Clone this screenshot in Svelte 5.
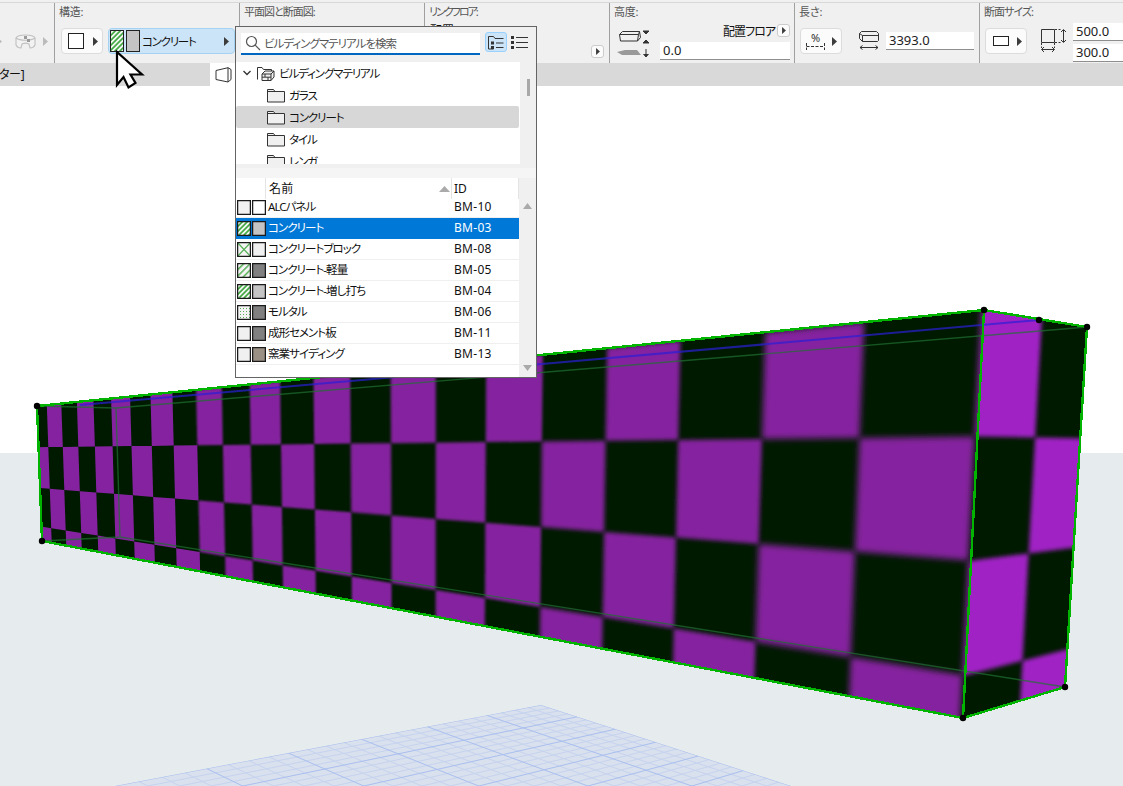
<script>
  // projective map of the unit square onto a quad (tl, tr, br, bl)
  const quad = (p0, p1, p2, p3) => {
    const dx1 = p1[0] - p2[0], dx2 = p3[0] - p2[0], sx = p0[0] - p1[0] + p2[0] - p3[0]
    const dy1 = p1[1] - p2[1], dy2 = p3[1] - p2[1], sy = p0[1] - p1[1] + p2[1] - p3[1]
    const den = dx1 * dy2 - dx2 * dy1
    const g = (sx * dy2 - dx2 * sy) / den
    const h = (dx1 * sy - sx * dy1) / den
    const a = p1[0] - p0[0] + g * p1[0], b = p3[0] - p0[0] + h * p3[0]
    const d = p1[1] - p0[1] + g * p1[1], e = p3[1] - p0[1] + h * p3[1]
    return (u, v) => {
      const w = g * u + h * v + 1
      return [(a * u + b * v + p0[0]) / w, (d * u + e * v + p0[1]) / w]
    }
  }
  const pts = list => list.map(p => p[0].toFixed(1) + ',' + p[1].toFixed(1)).join(' ')
  const line = (m, a, b) => { const s = m(...a), e = m(...b); return { x1: s[0], y1: s[1], x2: e[0], y2: e[1] } }

  const frontQuad = [[37, 406], [984, 310], [963, 718], [42, 541]]
  const sideQuad = [[984, 310], [1087, 327], [1065, 687], [963, 718]]

  const rowsV = [0, 0.302, 0.605, 0.892, 1.2]
  const frontMap = quad(...frontQuad)
  const sideMap = quad(...sideQuad)

  const frontCells = []
  for (let i = 0; i < 24; i++) {
    const u0 = -0.013 + 0.044 * i, u1 = u0 + 0.044
    for (let j = 0; j < 4; j++) {
      if ((i + j) % 2 == 0) continue
      const v0 = rowsV[j], v1 = rowsV[j + 1]
      const p = [frontMap(u0, v0), frontMap(u1, v0), frontMap(u1, v1), frontMap(u0, v1)]
      const w = p[1][0] - p[0][0]
      const level = w < 25 ? 0 : w < 40 ? 1 : w < 60 ? 2 : w < 85 ? 3 : 4
      frontCells.push({ points: pts(p), level })
    }
  }

  const sideCells = []
  const sideU = [-0.5, 0.53, 1.5]
  for (let i = 0; i < 2; i++) {
    for (let j = 0; j < 4; j++) {
      if ((i + j) % 2 == 1) continue
      const v0 = rowsV[j] - (j == 0 ? 0.2 : 0), v1 = rowsV[j + 1]
      sideCells.push(pts([sideMap(sideU[i], v0), sideMap(sideU[i + 1], v0), sideMap(sideU[i + 1], v1), sideMap(sideU[i], v1)]))
    }
  }

  // floor grid
  const gridQuad = [[541, 705], [791, 786], [371, 926], [115, 786]]
  const gridMap = quad(...gridQuad)
  const gridMinor = [], gridMajor = []
  for (let i = 0; i <= 24; i++) {
    const t = i / 24
    const target = i % 4 == 0 ? gridMajor : gridMinor
    target.push(line(gridMap, [t, 0], [t, 1]))
    target.push(line(gridMap, [0, t], [1, t]))
  }

  const folders = [
    { name: 'ガラス' },
    { name: 'コンクリート', selected: true },
    { name: 'タイル' },
    { name: 'レンガ' }
  ]

  const materials = [
    { name: 'ALCパネル', id: 'BM-10', pattern: '#f0f0f0', color: '#ffffff' },
    { name: 'コンクリート', id: 'BM-03', pattern: 'url(#hatch)', color: '#c4c4c4', selected: true },
    { name: 'コンクリートブロック', id: 'BM-08', pattern: 'url(#cross)', color: '#f0f0f0' },
    { name: 'コンクリート-軽量', id: 'BM-05', pattern: 'url(#hatch-wide)', color: '#808080' },
    { name: 'コンクリート-増し打ち', id: 'BM-04', pattern: 'url(#hatch)', color: '#c4c4c4' },
    { name: 'モルタル', id: 'BM-06', pattern: 'url(#dots)', color: '#808080' },
    { name: '成形セメント板', id: 'BM-11', pattern: '#f0f0f0', color: '#808080' },
    { name: '窯業サイディング', id: 'BM-13', pattern: '#f0f0f0', color: '#9a9084' }
  ]
</script>

<div class="page">
  <header class="toolbar">
    <section class="first">
      <div class="body">
        <svg class="tri faded cut" viewBox="0 0 5 9"><path d="M0 0l5 4.500L0 9z" /></svg>
        <svg width="21" height="15" viewBox="0 0 21 15" fill="#f2f2f2" stroke="#c0c0c0" stroke-width="1.100">
          <path d="M1 4c2-4 17-4 19 0v7c-1 2-3 3-5 3l-1-4c-2-1-5-1-7 0l-1 4c-2 0-4-1-5-3z" />
          <path d="M1 4c4 3 15 3 19 0" fill="none" />
          <path d="M9 2h3v3H9zM12 5h3v3h-3z" fill="#9a9a9a" stroke="none" />
        </svg>
        <svg class="tri faded" viewBox="0 0 5 9"><path d="M0 0l5 4.500L0 9z" /></svg>
      </div>
    </section>

    <section class="structure">
      <div class="label">構造:</div>
      <div class="body">
        <button class="pick small">
          <span class="plain-box"></span>
          <svg class="tri" viewBox="0 0 5 9"><path d="M0 0l5 4.500L0 9z" /></svg>
        </button>
        <button class="pick wide">
          <svg class="tall" viewBox="0 0 14 22"><rect x=".5" y=".5" width="13" height="21" fill="url(#hatch)" stroke="#222" /></svg>
          <svg class="tall" viewBox="0 0 14 22"><rect x=".5" y=".5" width="13" height="21" fill="#c4c4c4" stroke="#222" /></svg>
          <span class="pick-name">コンクリート</span>
          <svg class="tri" viewBox="0 0 5 9"><path d="M0 0l5 4.500L0 9z" /></svg>
        </button>
      </div>
    </section>

    <section>
      <div class="label squeezed">平面図と断面図:</div>
    </section>

    <section class="link">
      <div class="label kana">リンクフロア:</div>
      <div class="clipped">配置</div>
      <button class="mini"><svg class="tri" viewBox="0 0 5 9"><path d="M0 0l5 4.500L0 9z" /></svg></button>
    </section>

    <section class="height">
      <div class="label">高度:</div>
      <div class="body">
        <svg width="33" height="28" viewBox="0 0 33 28" fill="none" stroke="#333">
          <path d="M2.500 4.500l3-3h17l1 6-3 3.500H3.500zM2.500 4.500h19l-1 6.500M21.500 4.500l1-3" />
          <path d="M0 22l8-2h12l4 5H5z" fill="#999" stroke="none" />
          <path d="M26 1h6l-3 3zM26 13h6l-3-3zM29 19v7M26.500 24l2.500 3 2.500-3" fill="#333" stroke-width="1" />
        </svg>
        <div class="height-fields">
          <div class="height-top">配置フロア<button class="mini"><svg class="tri" viewBox="0 0 5 9"><path d="M0 0l5 4.500L0 9z" /></svg></button></div>
          <div class="field">0.0</div>
        </div>
      </div>
    </section>

    <section class="length">
      <div class="label">長さ:</div>
      <div class="body">
        <button class="pick small">
          <span class="percent">%<svg width="19" height="7" viewBox="0 0 19 7" fill="none" stroke="#333"><path d="M.5 0v7M18.500 0v7M.5 3.500h18" stroke-dasharray="3 1.500" /></svg></span>
          <svg class="tri" viewBox="0 0 5 9"><path d="M0 0l5 4.500L0 9z" /></svg>
        </button>
        <svg class="length-icon" width="21" height="20" viewBox="0 0 21 20" fill="none" stroke="#333">
          <path d="M.5 2.500l2-2h15l2 2v7l-1 1h-15l-3-3zM.5 2.500l3 2h16M3.500 4.500v6" />
          <path d="M1 16.500h18M3.500 14.500l-2.500 2 2.500 2M16.500 14.500l2.500 2-2.500 2" />
        </svg>
        <div class="field">3393.0</div>
      </div>
    </section>

    <section class="size">
      <div class="label squeezed">断面サイズ:</div>
      <div class="body">
        <button class="pick small">
          <span class="flat-box"></span>
          <svg class="tri" viewBox="0 0 5 9"><path d="M0 0l5 4.500L0 9z" /></svg>
        </button>
        <svg class="size-icon" width="25" height="24" viewBox="0 0 25 24" fill="none" stroke="#333">
          <path d="M.5.500h13v13H.5z" />
          <path d="M14 .5h6M14 13.500h6M.5 14v5M13.500 14v5" stroke-dasharray="2 1.500" />
          <path d="M22.500 1v12M20 3l2.500-2.500L25 3M20 11l2.500 2.500L25 11M1 20.500h12M3 18l-2.500 2.500L3 23M11 18l2.500 2.500L11 23" />
        </svg>
        <div class="size-fields">
          <div class="field">500.0</div>
          <div class="field">300.0</div>
        </div>
      </div>
    </section>
  </header>

  <nav class="tabs">
    <span class="tab-name">ター]</span>
    <div class="tab-active">
      <svg width="17" height="16" viewBox="0 0 17 16" fill="none" stroke="#333"><path d="M1 3.500L13 .7l3 1.800v10L13 15 1 12.500zM13 .7V15" /></svg>
    </div>
  </nav>

  <main class="viewport">
    <svg class="scene" viewBox="0 86 1123 700" width="1123" height="700">
      <defs>
        <pattern id="hatch" width="3.500" height="3.500" patternUnits="userSpaceOnUse" patternTransform="rotate(-45)">
          <rect width="3.500" height="3.500" fill="#f2f6f2" />
          <rect width="3.500" height="1.700" fill="#3fa83f" />
        </pattern>
        <pattern id="hatch-wide" width="4.500" height="4.500" patternUnits="userSpaceOnUse" patternTransform="rotate(-45)">
          <rect width="4.500" height="4.500" fill="#f4f4f4" />
          <rect width="4.500" height="1.500" fill="#57b157" />
        </pattern>
        <pattern id="cross" width="14" height="15" patternUnits="userSpaceOnUse">
          <rect width="14" height="15" fill="#f4f4f4" />
          <path d="M0 0l14 15M14 0L0 15" stroke="#57b157" stroke-width="1.200" />
        </pattern>
        <pattern id="dots" width="3" height="3" patternUnits="userSpaceOnUse">
          <rect width="3" height="3" fill="#f4f4f4" />
          <rect width="1" height="1" fill="#57b157" />
        </pattern>
        {#each [0.5, 1, 1.5, 2.200, 3] as sd, i}
          <filter id="blur{i}" x="-60%" y="-60%" width="220%" height="220%"><feGaussianBlur stdDeviation={sd} /></filter>
        {/each}
        <clipPath id="front-clip"><polygon points={pts(frontQuad)} /></clipPath>
        <clipPath id="side-clip"><polygon points={pts(sideQuad)} /></clipPath>
        <clipPath id="grid-clip"><polygon points={pts(gridQuad)} /></clipPath>
      </defs>

      <rect x="0" y="86" width="1123" height="367" fill="#ffffff" />
      <rect x="0" y="453" width="1123" height="333" fill="#e6ebed" />

      <polygon points={pts(gridQuad)} fill="#d9e0ee" />
      <g clip-path="url(#grid-clip)">
        {#each gridMinor as l}<line {...l} stroke="#c6d3ee" stroke-width="1" />{/each}
        {#each gridMajor as l}<line {...l} stroke="#a9bfee" stroke-width="1" />{/each}
      </g>

      <polygon points={pts(frontQuad)} fill="#001a00" />
      <g clip-path="url(#front-clip)">
        {#each frontCells as c}
          <polygon points={c.points} fill="#85229f" filter="url(#blur{c.level})" />
        {/each}
      </g>
      <polygon points={pts(sideQuad)} fill="#001a00" />
      <g clip-path="url(#side-clip)">
        {#each sideCells as c}
          <polygon points={c} fill="#a024c5" filter="url(#blur3)" />
        {/each}
      </g>

      <g fill="none" stroke="#1f7030" stroke-width="1.400" opacity=".7">
        <polyline points="37,406 116,408 120,537 42,541" />
        <line x1="116" y1="408" x2="1087" y2="327" />
        <line x1="120" y1="537" x2="1065" y2="687" />
      </g>
      <line x1="80" y1="405" x2="1039" y2="320" stroke="#2a1fd6" stroke-width="2" opacity=".7" />

      <g fill="none" stroke="#00b400" stroke-width="2.400" shape-rendering="crispEdges">
        <polygon points={pts(frontQuad)} />
        <polygon points={pts(sideQuad)} />
      </g>
      <g fill="#000">
        {#each [[37, 406], [42, 541], [984, 310], [1039, 320], [1087, 327], [1065, 687], [963, 718]] as p}
          <circle cx={p[0]} cy={p[1]} r="3.200" />
        {/each}
      </g>
    </svg>
  </main>

  <div class="popup">
    <div class="search-row">
      <div class="search">
        <svg width="16" height="16" viewBox="0 0 16 16" fill="none" stroke="#555" stroke-width="1.200"><circle cx="6.500" cy="6.500" r="5" /><path d="M10.200 10.200l4.800 4.800" /></svg>
        <span>ビルディングマテリアルを検索</span>
      </div>
      <button class="view active">
        <svg width="16" height="15" viewBox="0 0 16 15" fill="none" stroke="#333"><path d="M.5 14V1.500h5l1.500 2h8.500M.5 14h5" /><path d="M8 8h7.500M8 12.500h7.500" /><rect x="3" y="6.500" width="3" height="3" fill="#333" stroke="none" /><rect x="3" y="11" width="3" height="3" fill="#333" stroke="none" /></svg>
      </button>
      <button class="view">
        <svg width="17" height="13" viewBox="0 0 17 13" fill="none" stroke="#333"><path d="M5 1.500h12M5 6.500h12M5 11.500h12" /><path d="M0 0h3v3H0zM0 5h3v3H0zM0 10h3v3H0z" fill="#333" stroke="none" /></svg>
      </button>
    </div>

    <div class="tree-wrap">
      <div class="tree">
        <div class="tree-row root">
          <svg width="8" height="6" viewBox="0 0 8 6" fill="none" stroke="#333" stroke-width="1.300"><path d="M.5 1L4 4.500 7.500 1" /></svg>
          <svg class="root-folder" width="18" height="15" viewBox="0 0 18 15" fill="#f0f0f0" stroke="#333">
            <path d="M.5 13.500V1.500h4.500l1.500 2h8v2" fill="none" />
            <path d="M5 8l3-3h9v6l-3 3.500H5z" />
            <path d="M5 8h9v6.500M5 11.200h9M8 8v3M11 11.200v3M14 8l3-3" fill="none" />
          </svg>
          <span>ビルディングマテリアル</span>
        </div>
        {#each folders as f}
          <div class="tree-row child" class:selected={f.selected}>
            <svg width="18" height="15" viewBox="0 0 18 15" fill="#f0f0f0" stroke="#333"><path d="M.5 14V1.500h6l1.500 2h9.500V14z" /><path d="M.5 3.500H8" fill="none" /></svg>
            <span>{f.name}</span>
          </div>
        {/each}
      </div>
      <div class="tree-bar"><div class="thumb"></div></div>
    </div>

    <div class="splitter"></div>

    <div class="list-wrap">
      <div class="list">
        <div class="list-head">
          <div class="head-cell"></div>
          <div class="head-cell name">名前<svg width="11" height="6" viewBox="0 0 11 6"><path d="M5.500 0L11 6H0z" fill="#aaa" /></svg></div>
          <div class="head-cell id">ID</div>
        </div>
        {#each materials as m}
          <div class="list-row" class:selected={m.selected}>
            <div class="swatches">
              <svg class="sw" viewBox="0 0 14 15"><rect x=".6" y=".6" width="12.800" height="13.800" fill={m.pattern} stroke="#1a1a1a" stroke-width="1.300" /></svg>
              <svg class="sw" viewBox="0 0 14 15"><rect x=".6" y=".6" width="12.800" height="13.800" fill={m.color} stroke="#1a1a1a" stroke-width="1.300" /></svg>
            </div>
            <div class="cell-name">{m.name}</div>
            <div class="cell-id">{m.id}</div>
          </div>
        {/each}
      </div>
      <div class="list-bar">
        <svg width="9" height="6" viewBox="0 0 9 6"><path d="M4.500 0L9 6H0z" fill="#aaa" /></svg>
        <svg width="9" height="6" viewBox="0 0 9 6"><path d="M4.500 6L9 0H0z" fill="#aaa" /></svg>
      </div>
    </div>
  </div>

  <svg class="cursor" width="30" height="40" viewBox="0 0 30 40">
    <path d="M2 2v33l6.500-8 5 10.500 7-4.500-5-8.500h11.500z" fill="#fff" stroke="#000" stroke-width="2.200" stroke-linejoin="miter" />
  </svg>
</div>

<style>
  :global(body) {
    margin: 0;
    background: #fff;
    overflow: hidden;
  }
  .page {
    position: relative;
    width: 1123px;
    height: 786px;
    display: flex;
    flex-direction: column;
    overflow: hidden;
    font-family: "Noto Sans", "Noto Sans CJK JP", sans-serif;
    font-feature-settings: "palt";
    font-size: 12px;
    color: #111;
  }
  button {
    font: inherit;
    padding: 0;
    margin: 0;
  }

  /* toolbar */
  .toolbar {
    height: 63px;
    flex: none;
    box-sizing: border-box;
    display: flex;
    padding-top: 3px;
    background: linear-gradient(#f0f0f0 2px, #d8d8d8 2px, #d8d8d8 3px, #f0f0f0 3px);
  }
  section {
    width: 185px;
    flex: none;
    box-sizing: border-box;
    border-left: 1px solid #a0a0a0;
    position: relative;
  }
  section.first {
    width: 54px;
    border-left: 0;
  }
  .label {
    height: 16px;
    line-height: 17px;
    padding-left: 4px;
    font-size: 11px;
    letter-spacing: -0.2px;
    color: #555;
  }
  .label.squeezed {
    letter-spacing: -1px;
  }
  .label.kana {
    letter-spacing: -2px;
  }
  .body {
    height: 44px;
    display: flex;
    align-items: center;
  }
  .first .body {
    height: 60px;
    padding-top: 16px;
    box-sizing: border-box;
    gap: 7px;
  }
  .tri {
    width: 5px;
    height: 9px;
    flex: none;
    fill: #3c3c3c;
  }
  .tri.faded {
    fill: #bbb;
  }
  .tri.cut {
    margin-left: -3px;
    margin-right: 6px;
  }
  .pick {
    height: 26px;
    box-sizing: border-box;
    display: flex;
    align-items: center;
    background: #fbfbfb;
    border: 1px solid #dcdcdc;
    border-radius: 4px;
  }
  .pick.small {
    width: 42px;
    justify-content: space-between;
    padding: 0 4px 0 6px;
  }
  .structure .body {
    padding-left: 6px;
  }
  .pick.wide {
    width: 127px;
    margin-left: 5px;
    background: #cce4f7;
    border-color: #a5d2f2;
    padding: 0 5px 0 1px;
  }
  .tall {
    width: 14px;
    height: 22px;
    flex: none;
    display: block;
  }
  .tall + .tall {
    margin-left: 2px;
  }
  .pick-name {
    flex: 1;
    text-align: left;
    padding-left: 2px;
    font-size: 11.5px;
    letter-spacing: -1.25px;
    color: #111;
  }
  .plain-box {
    width: 14px;
    height: 14px;
    border: 1px solid #222;
    background: #fff;
  }
  .flat-box {
    width: 14px;
    height: 8px;
    border: 1px solid #222;
    background: #fff;
    margin-left: 1px;
  }
  .percent {
    display: flex;
    flex-direction: column;
    align-items: center;
    font-size: 11px;
    line-height: 11px;
    margin-left: -1px;
    color: #333;
  }
  .sw {
    width: 14px;
    height: 15px;
    flex: none;
    display: block;
  }
  .mini {
    width: 13px;
    height: 13px;
    display: flex;
    align-items: center;
    justify-content: center;
    background: #fbfbfb;
    border: 1px solid #ccc;
    border-radius: 3px;
    box-sizing: border-box;
  }
  .mini .tri {
    width: 4px;
    height: 7px;
  }
  .link .clipped {
    padding-left: 5px;
    height: 16px;
    line-height: 16px;
    margin-top: 4px;
  }
  .link .mini {
    position: absolute;
    left: 166px;
    top: 42px;
  }
  .field {
    height: 18px;
    box-sizing: border-box;
    line-height: 17px;
    padding-left: 3px;
    background: #fff;
    border-bottom: 1px solid #8e8e8e;
    font-size: 13px;
    color: #222;
  }
  .height .body {
    padding: 0 4px 0 7px;
    gap: 10px;
    align-items: flex-start;
    padding-top: 11px;
    box-sizing: border-box;
  }
  .height-fields {
    flex: 1;
    display: flex;
    flex-direction: column;
    gap: 5px;
    margin-top: -6px;
  }
  .height-top {
    display: flex;
    justify-content: flex-end;
    align-items: center;
    gap: 2px;
    height: 13px;
    letter-spacing: -1px;
  }
  .length .body {
    padding-left: 5px;
  }
  .length-icon {
    margin-left: 17px;
  }
  .length .field {
    width: 88px;
    margin-left: 6px;
  }
  .size .body {
    padding-left: 5px;
  }
  .size-icon {
    margin-left: 14px;
  }
  .size-fields {
    display: flex;
    flex-direction: column;
    gap: 3px;
    margin-left: 7px;
    flex: 1;
    margin-top: 2px;
  }

  /* tab strip */
  .tabs {
    height: 23px;
    flex: none;
    display: flex;
    background: #d9d9d9;
  }
  .tab-name {
    width: 211px;
    line-height: 23px;
    letter-spacing: -0.3px;
    margin-left: -1px;
  }
  .tab-active {
    width: 30px;
    background: #fff;
    display: flex;
    align-items: center;
    padding-left: 5px;
    box-sizing: border-box;
  }

  .viewport {
    flex: 1;
    position: relative;
  }
  .scene {
    position: absolute;
    left: 0;
    top: 0;
    display: block;
  }

  /* material popup */
  .popup {
    position: absolute;
    left: 235px;
    top: 26px;
    width: 302px;
    height: 352px;
    box-sizing: border-box;
    border: 1px solid #646464;
    background: #f0f0f0;
    display: flex;
    flex-direction: column;
  }
  .search-row {
    height: 35px;
    flex: none;
    box-sizing: border-box;
    padding: 5px 0 0 5px;
    display: flex;
    align-items: flex-start;
  }
  .search {
    width: 239px;
    height: 22px;
    margin-top: 1px;
    box-sizing: border-box;
    display: flex;
    align-items: center;
    gap: 3px;
    padding-left: 4px;
    background: #fff;
    border-bottom: 2px solid #0067c0;
    color: #555;
    font-size: 11.5px;
    letter-spacing: -1px;
  }
  .view {
    width: 22px;
    height: 20px;
    display: flex;
    align-items: center;
    justify-content: center;
    background: none;
    border: 1px solid transparent;
    border-radius: 3px;
    margin-left: 5px;
  }
  .view + .view {
    margin-left: 1px;
  }
  .view.active {
    background: #cce4f7;
    border-color: #99d1ff;
  }
  .tree-wrap {
    height: 102px;
    flex: none;
    display: flex;
  }
  .tree {
    flex: none;
    width: 284px;
    background: #fff;
    overflow: hidden;
  }
  .tree-row {
    height: 22px;
    display: flex;
    align-items: center;
    font-size: 11.5px;
    letter-spacing: -1.1px;
  }
  .tree-row.root {
    padding-left: 7px;
  }
  .root-folder {
    margin-left: 6px;
    margin-right: 4px;
  }
  .tree-row.child {
    padding-left: 31px;
    gap: 4px;
    margin-right: 1px;
  }
  .tree-row.selected {
    background: #d7d7d7;
    border-radius: 2px;
  }
  .tree-bar {
    flex: 1;
    position: relative;
  }
  .thumb {
    position: absolute;
    left: 7px;
    top: 17px;
    width: 3px;
    height: 17px;
    background: #a8a8a8;
  }
  .splitter {
    height: 14px;
    flex: none;
    box-sizing: border-box;
    border-top: 4px solid #f0f0f0;
    background: #f5f5f5;
  }
  .list-wrap {
    flex: 1;
    display: flex;
    min-height: 0;
  }
  .list {
    width: 283px;
    flex: none;
    background: #fff;
  }
  .list-head {
    display: grid;
    grid-template-columns: 30px 186px 67px;
    height: 19px;
    background: #f7f7f7;
  }
  .head-cell {
    background: #fff;
    line-height: 21px;
    border-right: 1px solid #e4e4e4;
    box-sizing: border-box;
  }
  .head-cell.name {
    padding-left: 3px;
    position: relative;
    letter-spacing: 0.2px;
  }
  .head-cell.name svg {
    position: absolute;
    right: 1px;
    top: 8px;
  }
  .head-cell.id {
    padding-left: 2px;
  }
  .list-row {
    display: grid;
    grid-template-columns: 31px 187px 1fr;
    align-items: center;
    height: 21px;
    box-sizing: border-box;
    border-bottom: 1px solid #efefef;
    line-height: 18px;
  }
  .list-row.selected {
    background: #0078d7;
    color: #fff;
    border-bottom-color: #0078d7;
  }
  .swatches {
    display: flex;
    gap: 1px;
    padding-left: 1px;
  }
  .cell-name {
    padding-left: 1px;
    font-size: 11.5px;
    letter-spacing: -0.95px;
  }
  .cell-id {
    letter-spacing: 0.3px;
    font-size: 12px;
  }
  .list-bar {
    flex: 1;
    display: flex;
    flex-direction: column;
    justify-content: space-between;
    align-items: center;
    padding: 25px 0 6px;
  }

  .cursor {
    position: absolute;
    left: 115px;
    top: 50px;
  }
</style>
